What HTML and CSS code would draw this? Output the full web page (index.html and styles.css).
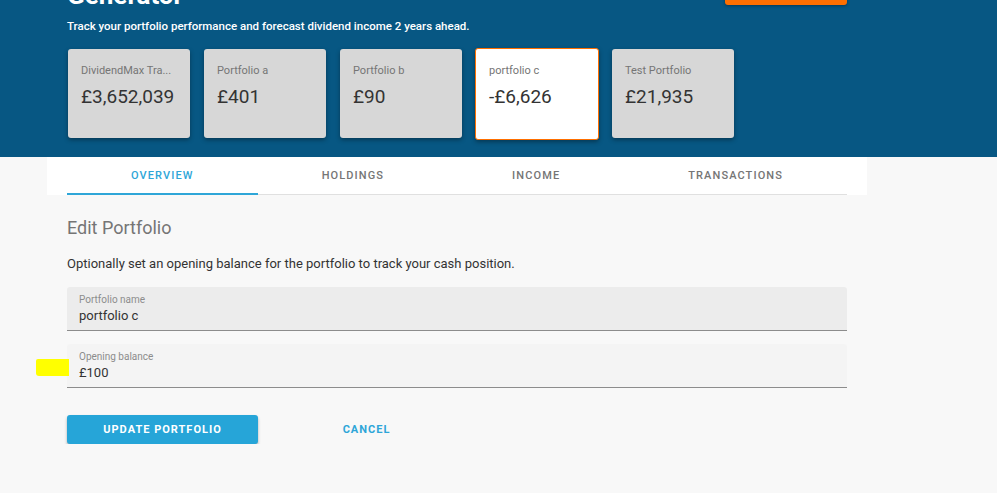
FILE: index.html
```html
<!DOCTYPE html>
<html lang="en">
<head>
  <meta charset="UTF-8" />
  <meta name="viewport" content="width=device-width, initial-scale=1.0" />
  <title>Dividend Portfolio Generator</title>
  <link rel="stylesheet" href="styles.css">
</head>
<body>
  <header class="hero">
    <div class="wrap">
      <div class="hero-top">
        <h1>Generator</h1>
        <button class="btn-orange">NEW PORTFOLIO</button>
      </div>
      <p class="subtitle">Track your portfolio performance and forecast dividend income 2 years ahead.</p>

      <div class="cards">
        <div class="card"><div class="card-label">DividendMax Tra...</div><div class="card-value">£3,652,039</div></div>
        <div class="card"><div class="card-label">Portfolio a</div><div class="card-value">£401</div></div>
        <div class="card"><div class="card-label">Portfolio b</div><div class="card-value">£90</div></div>
        <div class="card active"><div class="card-label">portfolio c</div><div class="card-value">-£6,626</div></div>
        <div class="card"><div class="card-label">Test Portfolio</div><div class="card-value">£21,935</div></div>
      </div>
    </div>
  </header>

  <nav class="tabs-panel">
    <div class="tabs">
      <a class="tab active">OVERVIEW</a>
      <a class="tab">HOLDINGS</a>
      <a class="tab">INCOME</a>
      <a class="tab">TRANSACTIONS</a>
    </div>
  </nav>

  <main class="content">
    <h2>Edit Portfolio</h2>
    <p class="intro">Optionally set an opening balance for the portfolio to track your cash position.</p>

    <div class="field focused">
      <label>Portfolio name</label>
      <div class="field-value">portfolio c</div>
    </div>
    <div class="field">
      <span class="marker"></span>
      <label>Opening balance</label>
      <div class="field-value">£100</div>
    </div>

    <div class="actions">
      <button class="btn-primary">UPDATE PORTFOLIO</button>
      <button class="btn-text">CANCEL</button>
    </div>
  </main>
</body>
</html>
```

FILE: styles.css
```css
body {
  margin: 0;
  font-family: Roboto, "Liberation Sans", sans-serif;
  background: #f8f8f8;
  color: #333;
  overflow: hidden;
}
.hero {
  background: #075783;
  height: 157px;
  overflow: hidden;
}
.wrap {
  margin-left: 67px;
  width: 780px;
}
.hero-top {
  display: flex;
  justify-content: space-between;
  align-items: flex-end;
  margin-top: -14px;
  height: 24px;
}
.hero-top h1 {
  margin: 0;
  color: white;
  font-size: 26px;
  font-weight: 700;
  line-height: 30px;
}
.btn-orange {
  width: 122px;
  height: 34px;
  margin-bottom: 5px;
  background: #ff6f00;
  color: white;
  border: none;
  border-radius: 3px;
  font-family: inherit;
  font-size: 11px;
  font-weight: 700;
  letter-spacing: 1px;
  white-space: nowrap;
  box-shadow: 0 1px 3px rgba(0, 0, 0, 0.35);
}
.subtitle {
  margin: 9px 0 0;
  color: white;
  font-size: 11.5px;
  font-weight: 500;
  line-height: 14px;
}
.cards {
  display: flex;
  gap: 14px;
  margin-top: 16px;
  margin-left: 1px;
}
.card {
  width: 122px;
  height: 89px;
  box-sizing: border-box;
  padding: 15px 13px;
  background: #d7d7d7;
  border-radius: 3px;
  box-shadow: 0 2px 4px rgba(0, 0, 0, 0.35);
}
.card.active {
  background: white;
  border: 1px solid #ff6f00;
  width: 124px;
  height: 92px;
  margin: -1px -1px 0 -1px;
}
.card-label {
  font-size: 11px;
  color: #757575;
  line-height: 14px;
  white-space: nowrap;
}
.card-value {
  margin-top: 7px;
  font-size: 19px;
  color: #333;
  line-height: 24px;
}

.tabs-panel {
  margin-left: 47px;
  width: 820px;
  background: white;
  padding: 0 20px;
  box-sizing: border-box;
  height: 38px;
}
.tabs {
  display: flex;
  border-bottom: 1px solid #e0e0e0;
  height: 37px;
}
.tab {
  flex: 1 1 auto;
  text-align: center;
  font-size: 11px;
  font-weight: 500;
  letter-spacing: 1.1px;
  color: #757575;
  line-height: 37px;
  height: 36px;
}
.tab.active {
  color: #2ea6d8;
  border-bottom: 2px solid #2ea6d8;
  margin-bottom: -1px;
}

.content {
  margin-left: 67px;
  width: 780px;
  padding-top: 21px;
}
.content h2 {
  margin: 0;
  font-size: 18px;
  font-weight: 400;
  color: #757575;
  line-height: 24px;
}
.intro {
  margin: 16px 0 0;
  font-size: 13px;
  color: #333;
  line-height: 16px;
}
.field {
  position: relative;
  height: 44px;
  box-sizing: border-box;
  padding: 7px 12px 0;
  background: #f4f4f4;
  border-bottom: 1px solid #8c8c8c;
  border-radius: 3px 3px 0 0;
  margin-top: 13px;
}
.field.focused {
  background: #ececec;
  margin-top: 15px;
}
.field label {
  display: block;
  font-size: 10px;
  color: #8c8c8c;
  line-height: 12px;
}
.field-value {
  margin-top: 2px;
  font-size: 13px;
  color: #333;
  line-height: 16px;
}
.marker {
  position: absolute;
  left: -31px;
  top: 15px;
  width: 33px;
  height: 17px;
  background: #ffff00;
  border-radius: 2px 0 0 3px;
}
.actions {
  display: flex;
  align-items: center;
  margin-top: 27px;
}
.btn-primary {
  width: 191px;
  height: 29px;
  background: #26a5d8;
  color: white;
  border: none;
  border-radius: 3px;
  font-family: inherit;
  font-size: 11px;
  font-weight: 700;
  letter-spacing: 1px;
  box-shadow: 0 2px 3px rgba(0, 0, 0, 0.3);
}
.btn-text {
  margin-left: 50px;
  width: 117px;
  background: none;
  border: none;
  color: #2ea6d8;
  font-family: inherit;
  font-size: 11px;
  font-weight: 700;
  letter-spacing: 1px;
}
```
